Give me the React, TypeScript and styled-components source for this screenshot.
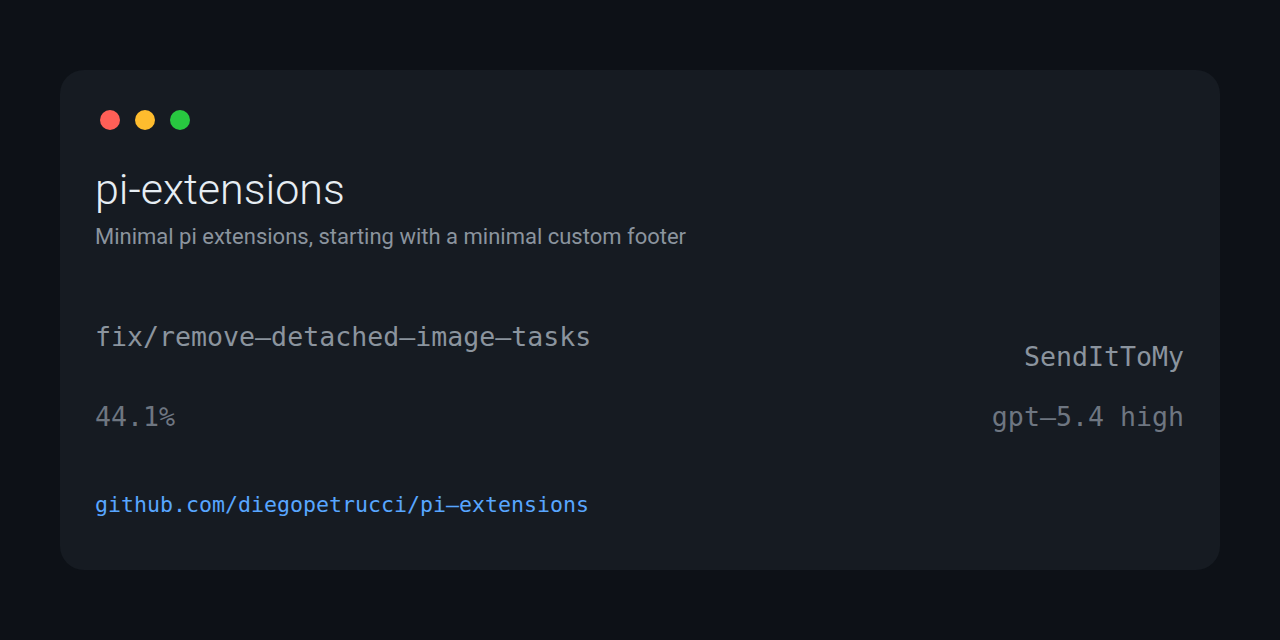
import React from "react";
import styled, { createGlobalStyle } from "styled-components";

const Global = createGlobalStyle`
  html, body { margin: 0; padding: 0; background: #0d1117; }
  body { width: 1280px; height: 640px; overflow: hidden; }
`;

const Page = styled.div`
  width: 1280px;
  height: 640px;
  box-sizing: border-box;
  padding: 70px 60px;
  background: #0d1117;
`;

const Card = styled.div`
  box-sizing: border-box;
  height: 500px;
  background: #161b22;
  border-radius: 24px;
  padding: 40px 36px 0 35px;
  display: flex;
  flex-direction: column;
`;

const Dots = styled.div`
  display: flex;
  gap: 15px;
  margin-left: 5px;
`;

const Dot = styled.span<{ $color: string }>`
  width: 20px;
  height: 20px;
  border-radius: 50%;
  background: ${(p) => p.$color};
`;

const Title = styled.h1`
  margin: 34px 0 0;
  font-family: Roboto, "Noto Sans", sans-serif;
  font-weight: 300;
  font-size: 43px;
  line-height: 50px;
  color: #e6edf3;
`;

const Subtitle = styled.p`
  margin: 8px 0 0;
  font-family: Roboto, "Noto Sans", sans-serif;
  font-weight: 400;
  font-size: 22px;
  line-height: 30px;
  color: #8b949e;
`;

const Row = styled.div<{ $top: number }>`
  display: flex;
  justify-content: space-between;
  align-items: flex-start;
  margin-top: ${(p) => p.$top}px;
`;

const Mono = styled.span<{ $tone: "mid" | "dim"; $offset?: number }>`
  font-family: "DejaVu Sans Mono", "Liberation Mono", monospace;
  font-size: 26.6px;
  line-height: 34px;
  white-space: pre;
  color: ${(p) => (p.$tone === "mid" ? "#8b949e" : "#6e7681")};
  padding-top: ${(p) => p.$offset ?? 0}px;
`;

const Link = styled.a`
  margin-top: 57px;
  font-family: "DejaVu Sans Mono", "Liberation Mono", monospace;
  font-size: 21.6px;
  line-height: 28px;
  color: #58a6ff;
  text-decoration: none;
  align-self: flex-start;
`;

export default function App() {
  return (
    <>
      <Global />
      <Page>
        <Card>
          <Dots>
            <Dot $color="#ff5f57" />
            <Dot $color="#febc2e" />
            <Dot $color="#28c840" />
          </Dots>
          <Title>pi-extensions</Title>
          <Subtitle>Minimal pi extensions, starting with a minimal custom footer</Subtitle>
          <Row $top={68}>
            <Mono $tone="mid">fix/remove–detached–image–tasks</Mono>
            <Mono $tone="mid" $offset={20}>SendItToMy</Mono>
          </Row>
          <Row $top={26}>
            <Mono $tone="dim">44.1%</Mono>
            <Mono $tone="dim">gpt–5.4 high</Mono>
          </Row>
          <Link href="#">github.com/diegopetrucci/pi–extensions</Link>
        </Card>
      </Page>
    </>
  );
}
